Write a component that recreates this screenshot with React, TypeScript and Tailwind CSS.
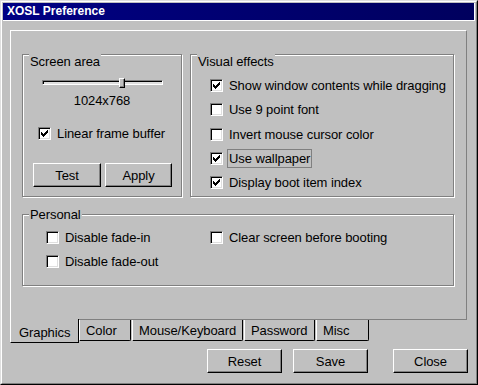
import React from "react";

const CHECK =
  "M6 0h1v1h-1z M5 1h2v1h-2z M0 2h1v1h-1z M4 2h3v1h-3z M0 3h2v1h-2z M3 3h3v1h-3z M0 4h5v1h-5z M1 5h3v1h-3z M2 6h1v1h-1z";

function Check({ checked }: { checked?: boolean }) {
  return (
    <span className="flex h-[13px] w-[13px] shrink-0 items-center justify-center border border-t-[#808080] border-l-[#808080] border-r-white border-b-white bg-white shadow-[inset_1px_1px_0_#000,inset_-1px_-1px_0_#dfdfdf]">
      {checked && (
        <svg width="7" height="7" viewBox="0 0 7 7" shapeRendering="crispEdges">
          <path d={CHECK} fill="#000" />
        </svg>
      )}
    </span>
  );
}

function Row({
  checked,
  label,
  focus,
}: {
  checked?: boolean;
  label: string;
  focus?: boolean;
}) {
  return (
    <div className="flex h-[15px] items-center">
      <Check checked={checked} />
      <span
        className={
          focus
            ? "ml-[6px] whitespace-nowrap leading-[15px] outline outline-1 outline-offset-1 outline-[#808080]"
            : "ml-[6px] whitespace-nowrap leading-[15px]"
        }
      >
        {label}
      </span>
    </div>
  );
}

function Btn({ children, className }: { children: React.ReactNode; className: string }) {
  return (
    <div
      className={`flex h-[24px] items-center justify-center border border-t-white border-l-white border-r-black border-b-black bg-[#c0c0c0] leading-[15px] shadow-[inset_-1px_-1px_0_#808080] ${className}`}
    >
      {children}
    </div>
  );
}

function Group({
  label,
  labelClass,
  className,
  children,
}: {
  label: string;
  labelClass: string;
  className: string;
  children: React.ReactNode;
}) {
  return (
    <div
      className={`relative border border-[#808080] shadow-[inset_1px_1px_0_#fff,1px_1px_0_#fff] ${className}`}
    >
      <span
        className={`absolute left-[6px] whitespace-nowrap bg-[#c0c0c0] px-[1px] leading-[15px] ${labelClass}`}
      >
        {label}
      </span>
      {children}
    </div>
  );
}

export default function App() {
  return (
    <div className="h-[385px] w-[478px] border border-t-[#dfdfdf] border-l-[#dfdfdf] border-r-black border-b-black bg-[#c0c0c0] font-['Liberation_Sans',Arial,sans-serif] text-[13px] tracking-[-0.08px] text-black">
      <div className="flex h-full flex-col border border-t-white border-l-white border-r-[#808080] border-b-[#808080]">
        {/* Title bar */}
        <div className="mx-[1px] mt-[1px] flex h-[18px] items-center border-r border-b border-r-white border-b-white bg-linear-to-r from-[#000084] to-[#00005e] pl-[4px] text-[12px] font-bold leading-[15px] tracking-normal text-white">
          XOSL Preference
        </div>

        {/* Body */}
        <div className="pl-[8px] pt-[9px]">
          {/* Tab page */}
          <div className="h-[289px] w-[457px] border-t border-l border-r border-t-white border-l-white border-r-[#808080] pl-[11px] pt-[23px]">
            <div className="flex gap-[8px]">
              <Group
                label="Screen area"
                labelClass="top-[-1px]"
                className="flex h-[143px] w-[160px] flex-col items-center"
              >
                <div className="relative ml-[19px] mt-[25px] h-[5px] w-[121px] self-start border border-t-[#808080] border-l-[#808080] border-r-white border-b-white bg-[#dfdfdf] shadow-[inset_1px_1px_0_#000]">
                  <div className="absolute left-[76px] top-[-3px] h-[10px] w-[6px] border border-t-white border-l-white border-r-black border-b-black bg-[#c0c0c0] shadow-[inset_-1px_-1px_0_#808080]" />
                </div>
                <div className="mt-[8px] leading-[15px]">1024x768</div>
                <div className="ml-[15px] mt-[18px] self-start">
                  <Row checked label="Linear frame buffer" />
                </div>
                <div className="ml-[10px] mt-[22px] flex gap-[4px] self-start">
                  <Btn className="w-[68px]">Test</Btn>
                  <Btn className="w-[67px]">Apply</Btn>
                </div>
              </Group>

              <Group
                label="Visual effects"
                labelClass="top-[-1px]"
                className="flex h-[143px] w-[264px] flex-col gap-[9.25px] pl-[19px] pt-[23px]"
              >
                <Row checked label="Show window contents while dragging" />
                <Row label="Use 9 point font" />
                <Row label="Invert mouse cursor color" />
                <Row checked focus label="Use wallpaper" />
                <Row checked label="Display boot item index" />
              </Group>
            </div>

            <Group
              label="Personal"
              labelClass="top-[-8px]"
              className="mt-[17px] grid h-[72px] w-[432px] grid-cols-[164px_1fr] content-start gap-y-[9px] pl-[23px] pt-[15px]"
            >
              <Row label="Disable fade-in" />
              <Row label="Clear screen before booting" />
              <Row label="Disable fade-out" />
            </Group>
          </div>

          {/* Tabs */}
          <div className="flex">
            <div className="h-[24px] w-[69px] border-l border-r border-b border-l-white border-r-black border-b-black pl-[8px] pt-[6px] leading-[15px]">
              Graphics
            </div>
            <div className="flex h-[23px] w-[388px] items-start gap-[1px] border-t border-t-[#808080]">
              {[
                ["Color", "w-[52px]"],
                ["Mouse/Keyboard", "w-[111px]"],
                ["Password", "w-[71px]"],
                ["Misc", "w-[53px]"],
              ].map(([t, w]) => (
                <div
                  key={t}
                  className={`h-[21px] whitespace-nowrap rounded-br-[2px] border-l border-r border-b border-l-white border-r-black border-b-black pl-[6px] pt-[3px] leading-[15px] ${w}`}
                >
                  {t}
                </div>
              ))}
            </div>
          </div>
        </div>

        {/* Buttons */}
        <div className="mt-[6px] flex justify-end pr-[8px]">
          <Btn className="w-[75px]">Reset</Btn>
          <Btn className="ml-[11px] w-[75px]">Save</Btn>
          <Btn className="ml-[25px] w-[75px]">Close</Btn>
        </div>
      </div>
    </div>
  );
}
